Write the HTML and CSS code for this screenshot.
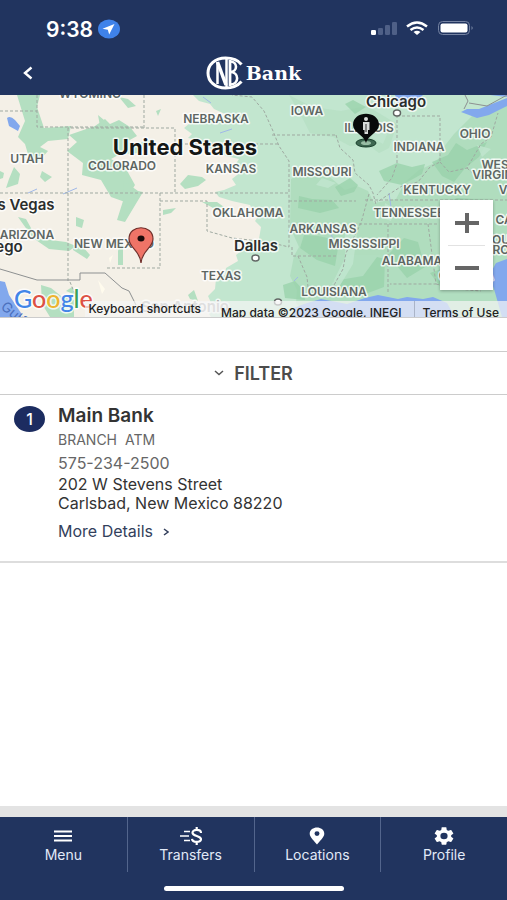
FILE: index.html
```
<!DOCTYPE html>
<html lang="en">
<head>
  <meta charset="UTF-8">
  <meta name="viewport" content="width=device-width, initial-scale=1.0">
  <title>CNB Bank Locations</title>
  <link rel="stylesheet" href="styles.css">
</head>
<body>
  <!-- Status bar -->
  <div class="status-bar">
    <div class="status-left">
      <span class="time">9:38</span>
      <svg width="22" height="20" viewBox="0 0 22 20" aria-hidden="true">
        <ellipse cx="11" cy="10" rx="11" ry="9.5" fill="#3f82ea"/>
        <path d="M16.5 5 4.5 9.7l5.3 1.1 1.4 4.7z" fill="#fff"/>
      </svg>
    </div>
    <svg width="103" height="16" viewBox="0 0 103 16" aria-hidden="true">
      <rect x="0" y="9" width="5" height="5" rx="1.3" fill="#fff"/>
      <rect x="7" y="7" width="5" height="7" rx="1.3" fill="#4f6087"/>
      <rect x="14" y="4" width="5" height="10" rx="1.3" fill="#4f6087"/>
      <rect x="21" y="1" width="5" height="13" rx="1.3" fill="#4f6087"/>
      <g fill="none" stroke="#fff" stroke-width="2.5">
        <path d="M36 5.5q10-8 20 0"/>
        <path d="M39.5 9q6.500-5 13 0"/>
      </g>
      <path d="M42.500 11q3.500-2.500 7 0L46 14z" fill="#fff"/>
      <rect x="67.500" y=".5" width="31" height="13" rx="4" fill="none" stroke="#7583a2"/>
      <rect x="69.500" y="2.500" width="27" height="9" rx="2" fill="#fff"/>
      <path d="M100.500 5q2.500 2 0 4z" fill="#7583a2"/>
    </svg>
  </div>

  <!-- Header -->
  <header class="header">
    <button class="back" aria-label="Back">
      <svg width="10" height="14" viewBox="0 0 10 14"><path d="M8.500 1.500 2 7l6.500 5.500" fill="none" stroke="#fff" stroke-width="2.400"/></svg>
    </button>
    <div class="logo">
      <svg width="38" height="34" viewBox="0 0 38 34" aria-hidden="true">
        <g fill="none" stroke="#fff">
          <path d="M35.500 8.500C32 4 26 2 19.500 2 9 2 2 8.500 2 17s7 15 17.500 15c6.500 0 12-2 16-6.500" stroke-width="3"/>
          <path d="M11.500 6v22M20.500 3v28" stroke-width="2.500"/>
          <path d="M11.500 6l8.500 23" stroke-width="3.500"/>
          <path d="M24 4v26" stroke-width="2.800"/>
          <path d="M24 5.500c8 0 8 10.500 0 10.500 9.500 0 9.500 12.500 0 12.500" stroke-width="2.600"/>
        </g>
      </svg>
      <span>Bank</span>
    </div>
  </header>

  <!-- Map -->
  <div class="map">
    <svg class="map-art" viewBox="0 0 507 222" preserveAspectRatio="xMidYMid slice" role="img" aria-label="Map of the United States">
      <rect width="507" height="222" fill="#f4f0e7"/>
      <path fill="#c2e6cf" d="M193 0l6 6 11 3 4 5 11 5-4 5-13-2-18 6-6 5 8 6-4 4 11 2 8 8 13 2 6 6 13 3-4 6 7 6-10 8 4 6-12 5-9 2 4 5 13 4 18 4 3 6 7 3-5 7 6 6-2 12-11 2-3 7-9 7 2 6-12 7-1 7-9 4-1 10-7 7 4 9-3 9 2 3H507V0z"/>
      <g fill="#acdcbb" opacity=".8">
        <path d="M289 0l23 12 29 4 26-5 30 18-8 24-10 5-12-9-17 2-17-9-23-4-9-18z" opacity=".5"/>
        <path d="M291 84l19-10 21 9 14 12 12-4 11 5 6 12 22-4 9-17 14-12 18-8 6-14 11-14 20-20 24-8h19V222H310l-14-14 1-13-7-14 4-20 5-9-9-20z"/>
      </g>
      <g fill="#b4dfc1">
        <path d="M17 0h23l-3 12 7 21 27-2-3 13-20 2-8 6 8 4-11 12-7-2-5-17-7-7 7-16z"/>
        <path d="M95 31l10-7 5 5 9-4 11 7 7 9-9 5 5 4 20-6-2 6-11 8-20 1-9 5 14 8 10 18-5 8-5 9-14-5-10-17-19-5 1-12-16-12 10-9-8-7z"/>
        <path d="M124 86l14 10 5 1-6 10-12 20-8-2 6-19zM14 72l6 7-2 10-12 4 3-9zM42 76l10 6-7 5-5-5zM18 122l8 2 5 9 4 10 31 4 10 4-7 5-20-2-16-11zM76 122l8 3-2 8-6-2zM76 144l14 16-3 4-14-9zM41 190l10 3 10 8 13 4v17H50l-8-13zM120 149h3v21h-5v-14zM66 196l6-4 4 8z"/>
        <path d="M98 20l12 10-10 1zM119 2l9 2 8 7-8 2zM156 16l5-2-3 7zM188 80l14 2 4 3-8 6-13 3-5-5zM163 115l13-2-5 5-8 2zM202 107l15 0 7 5-9 2zM188 200l6-5 4 11-8-2zM0 76l4 2-1 5-3 1z"/>
      </g>
      <g fill="#98d2aa" opacity=".75">
        <path d="M299 101l13 3 20 1 7 8-19 5-22-5zM304 140l14 1 14 3 6 9-3 18-18-6-17-12zM283 190l12-4 9 10 1 9-20-2zM335 92l15-9 8 7-4 7-13 4zM379 76l18-8 15 4 13-3-3 10-20 11-18-4zM388 160l16-17 14 4 7 25-18 11zM333 186l30-5 14-19 8 2-1 28-24 9-26-6zM432 67l16-7 8-12 11 7 20-8-8 15-13 10-12 15-12-6z"/>
        <path d="M345 9l8-4 13 7-11 7zM442 110l15-7 30 2-15 8-22 8zM430 178l17-6 9 14-14 8z"/>
      </g>
      <g fill="#c2e6cf" opacity=".8">
        <path d="M322 83l14 5-8 5-12-3zM376 32l12 5-5 12-12-7zM410 42l13 2-5 7-13-3zM385 108l10 6-4 12-8-3zM477 50l14 4-9 8zM345 135l12 4-4 30-14 23-7-3 13-26z"/>
      </g>
      <g fill="#fffbed"><path d="M98 185l7 9-3 5zM109 163l4-3-3 8z"/></g>
      <!-- Water -->
      <g fill="#82a8ed">
        <path d="M7 23q3-3 8 2l5 6-2 5-9-5zM0 186l5 1 4 13 12 18v4H0z"/>
        <path d="M395 0h28l-7 7-9 1-6 4-3-3zM461 17l6-3 12 0 28-11v8l-18 9-12 3zM490 0h17v2z"/>
        <path d="M294 213l10-4 17-5 26 5 18-6 13-3 20 4 9-2 16 2 10-2 14 6 8 14H294zM507 164l-11 4-7 13 5 13 8 28h5z"/>
      </g>
      <g fill="none" stroke="#a0b8e8" stroke-width="1">
        <path d="M63 99l14-6M28 98l9-4M220 38l12-4M203 2l8 6M389 98l2 14M294 186l4-4M333 144l-4-11"/>
      </g>
      <!-- State lines -->
      <g fill="none" stroke="#9fa9a1" stroke-width="1" stroke-dasharray="3 2">
        <path d="M0 16h37M37 0v32h107M68 33v154M144 0v33h31v65M144 33h-76M0 98h289V66l-10-15-6-15-9-20-12-14-20-2M175 49h104M160 98v75h-54M160 106h47v30l25 7 36 4 21 5V98M272 40h65M289 106h67M292 152v9h46M298 161l9 21 2 20M336 40l4 13 13 12 2 13 14 12 4 8 3 12M397 20v48l-5 15-15 17M397 21h43v46l-10 5-12 15-16 4-25 16M440 67l9 10 18-4 14-24 10-7 7-24M467 73l10 9 30-7M365 105h142M354 129h85M388 129v70M428 129l8 60h-46M436 189l20 5 25 2M467 105l-16 24 24 19 13 28M369 99l-8 29-15 30-3 16-10 18M70 187l5 12-5 8"/>
      </g>
      <g fill="none" stroke="#8d9091" stroke-width="1"><path d="M0 174l37 11h43v-7h25l17 15 7 3 7 14M464 14l4-8-3-6M469 8l18 3 20-11"/></g>
      <!-- State names -->
      <g class="state">
        <text x="90" y="3">WYOMING</text>
        <text x="216" y="28">NEBRASKA</text>
        <text x="307" y="20">IOWA</text>
        <text x="369" y="37">ILLINOIS</text>
        <text x="475" y="43">OHIO</text>
        <text x="419" y="56">INDIANA</text>
        <text x="27" y="68">UTAH</text>
        <text x="122" y="75">COLORADO</text>
        <text x="231" y="78">KANSAS</text>
        <text x="322" y="81">MISSOURI</text>
        <text x="499" y="74">WEST</text>
        <text x="499" y="84">VIRGINIA</text>
        <text x="437" y="99">KENTUCKY</text>
        <text x="503" y="99">V</text>
        <text x="248" y="122">OKLAHOMA</text>
        <text x="409" y="122">TENNESSEE</text>
        <text x="323" y="138">ARKANSAS</text>
        <text x="27" y="144">ARIZONA</text>
        <text x="114" y="153">NEW MEXICO</text>
        <text x="364" y="153">MISSISSIPPI</text>
        <text x="412" y="170">ALABAMA</text>
        <text x="508" y="129">CAR</text>
        <text x="501" y="149">OU</text>
        <text x="501" y="159">RO</text>
        <text x="466" y="185">GEORGIA</text>
        <text x="221" y="185">TEXAS</text>
        <text x="334" y="201">LOUISIANA</text>
      </g>
      <!-- Cities -->
      <g class="city">
        <text x="396" y="12">Chicago</text>
        <text x="256" y="156">Dallas</text>
        <text x="26" y="115">s Vegas</text>
        <text x="9" y="157">ego</text>
        <text x="185" y="217" class="faded">San Antonio</text>
      </g>
      <text class="country" x="185" y="60">United States</text>
      <text class="sea" x="0" y="213" transform="rotate(40 0 213)">Gulf</text>
      <g fill="#fff" stroke="#626765" stroke-width="1.500">
        <ellipse cx="397" cy="18" rx="3.500" ry="3"/><ellipse cx="255.500" cy="163" rx="3.500" ry="3"/><ellipse cx="278" cy="207" rx="3.500" ry="3"/>
      </g>
      <!-- Branch pin -->
      <path d="M141 168c-1-13-12-15-12-24 0-15 24-15 24 0 0 9-11 11-12 24z" fill="#ef7467" stroke="#702f2b" stroke-width="1.200"/>
      <ellipse cx="141" cy="143.500" rx="3.500" ry="3" fill="#1b0b0a"/>
      <!-- Current position pin -->
      <ellipse cx="366" cy="48" rx="10" ry="4" fill="#3e6751" stroke="#173d2a"/>
      <ellipse cx="366" cy="48" rx="5" ry="2" fill="#99bda5"/>
      <path d="M366 48c-2-8-13-11-13-18 0-15 26-15 26 0 0 7-11 10-13 18z" fill="#080a0a"/>
      <circle cx="366" cy="24" r="2" fill="#d8dbd9"/>
      <path d="M363 27h6.500v8H368v4h-3.500v-4H363z" fill="#d8dbd9"/><path d="M366 29v8" stroke="#333"/>
      <text class="google" x="14" y="213"><tspan fill="#4285e8">G</tspan><tspan fill="#dd5144">o</tspan><tspan fill="#edb42f">o</tspan><tspan fill="#4285e8">g</tspan><tspan fill="#38a159">l</tspan><tspan fill="#dd5144">e</tspan></text>
    </svg>
    <div class="zoom-control">
      <button aria-label="Zoom in"><svg width="24" height="20" viewBox="0 0 24 20"><path d="M0 10h24M12 0v20" stroke="#666" stroke-width="4"/></svg></button>
      <button aria-label="Zoom out"><svg width="24" height="20" viewBox="0 0 24 20"><path d="M0 10h24" stroke="#666" stroke-width="4"/></svg></button>
    </div>
    <div class="map-credits">
      <button class="shortcuts">Keyboard shortcuts</button>
      <span class="map-data">Map data ©2023 Google, INEGI</span>
      <a class="terms" href="#">Terms of Use</a>
    </div>
  </div>

  <!-- Branch list -->
  <main class="locations">
    <button class="filter">
      <svg width="10" height="6" viewBox="0 0 10 6" aria-hidden="true"><path d="M1 1l4 3.500L9 1" fill="none" stroke="#555" stroke-width="1.500"/></svg>
      FILTER
    </button>
    <article class="branch">
      <span class="number">1</span>
      <div class="details">
        <h2>Main Bank</h2>
        <p class="services"><span>BRANCH</span><span>ATM</span></p>
        <a class="phone" href="tel:5752342500">575-234-2500</a>
        <p class="address">202 W Stevens Street<br>Carlsbad, New Mexico 88220</p>
        <a class="more" href="#">More Details
          <svg width="6" height="8" viewBox="0 0 6 8" aria-hidden="true"><path d="M1 1l4 3-4 3" fill="none" stroke="#333f5c" stroke-width="1.500"/></svg>
        </a>
      </div>
    </article>
  </main>

  <!-- Bottom navigation -->
  <footer class="footer">
    <nav class="tabs">
      <a href="#">
        <svg width="20" height="18" viewBox="0 0 20 18" aria-hidden="true"><path d="M1 4.500h18M1 9h18M1 13.500h18" stroke="#fff" stroke-width="1.800"/></svg>
        Menu
      </a>
      <a href="#">
        <svg width="22" height="18" viewBox="0 0 22 18" aria-hidden="true">
          <path d="M4 4.500h6M0 9h9M4 13.500h6" stroke="#fff" stroke-width="1.700"/>
          <path d="M21 6c0-4-8.500-4-8.500-.3S21 8.500 21 12.200s-8.500 3.800-9-.4M16.700 0v3M16.700 15v3" fill="none" stroke="#fff" stroke-width="2.200"/>
        </svg>
        Transfers
      </a>
      <a href="#">
        <svg width="16" height="18" viewBox="0 0 16 18" aria-hidden="true"><path fill="#fff" fill-rule="evenodd" d="M8 17.500C6 14.500.7 10.500.7 6.700c0-8.300 14.600-8.300 14.600 0C15.300 10.500 10 14.500 8 17.500zM8 4.300a2.500 2.300 0 1 0 0 4.600 2.500 2.300 0 0 0 0-4.600z"/></svg>
        Locations
      </a>
      <a href="#">
        <svg width="20" height="18" viewBox="2 2 20 20" preserveAspectRatio="none" aria-hidden="true"><path fill="#fff" d="M19.140 12.940c.04-.3.060-.61.060-.94s-.02-.64-.07-.94l2.030-1.580c.18-.14.230-.41.120-.61l-1.920-3.320c-.12-.22-.37-.29-.59-.22l-2.390.96c-.5-.38-1.030-.7-1.620-.94l-.36-2.540c-.04-.24-.24-.41-.48-.41h-3.840c-.24 0-.43.170-.47.410l-.36 2.540c-.59.240-1.130.570-1.620.94l-2.390-.96c-.22-.08-.47 0-.59.220L2.740 8.870c-.12.210-.08.470.120.610l2.030 1.580c-.05.300-.09.630-.09.940s.02.640.070.940l-2.030 1.580c-.18.140-.23.410-.12.610l1.920 3.320c.12.220.370.290.590.220l2.390-.96c.5.380 1.030.7 1.620.94l.36 2.540c.05.240.240.410.480.410h3.840c.24 0 .44-.17.470-.41l.36-2.540c.59-.24 1.130-.56 1.620-.94l2.390.96c.22.080.47 0 .59-.22l1.920-3.320c.12-.22.070-.47-.12-.61zM12 15.600a3.600 3.600 0 1 1 0-7.200 3.600 3.600 0 0 1 0 7.200z"/></svg>
        Profile
      </a>
    </nav>
    <div class="home-bar"></div>
  </footer>
</body>
</html>
```

FILE: styles.css
```
* {
  box-sizing: border-box;
}

body {
  margin: 0;
  min-height: 100vh;
  display: flex;
  flex-direction: column;
  font-family: Inter, Roboto, sans-serif;
  font-size: 16px;
  color: #333;
  background-color: #fff;
}

h2,
p {
  margin: 0;
}

button {
  font: inherit;
  color: inherit;
  background: none;
  border: none;
  padding: 0;
  cursor: pointer;
}

a {
  color: inherit;
  text-decoration: none;
}

.status-bar {
  display: flex;
  justify-content: space-between;
  align-items: center;
  height: 50px;
  padding: 8px 33px 0 46px;
  background-color: #21345f;
}

.status-left {
  display: flex;
  align-items: center;
  gap: 5px;
}

.time {
  color: #fff;
  font-size: 21px;
  font-weight: 600;
}

.header {
  display: grid;
  grid-template-columns: 56px 1fr 56px;
  align-items: center;
  height: 45px;
  background-color: #21345f;
}

.back {
  height: 44px;
}

.back svg {
  display: block;
  margin: 0 auto;
}

.logo {
  display: flex;
  justify-content: center;
  align-items: center;
  gap: 2px;
  color: #fff;
  font-family: "DejaVu Serif", serif;
  font-size: 19px;
  font-weight: bold;
}

/* Map */
.map {
  position: relative;
  height: 223px;
  overflow: hidden;
  border-bottom: 1px solid #ccc;
}

.map-art {
  display: block;
  width: 100%;
  height: 222px;
}

.map text {
  font-family: Inter, sans-serif;
  text-anchor: middle;
  paint-order: stroke;
  stroke: rgba(255, 255, 255, 0.8);
  stroke-width: 3px;
  stroke-linejoin: round;
}

.state text {
  font-size: 12px;
  font-weight: 600;
  fill: #5e6663;
}

.city text {
  font-size: 15px;
  font-weight: 600;
  fill: #2b2e2d;
}

.city .faded {
  fill: #aaa;
}

.map .country {
  font-size: 22px;
  font-weight: 700;
  fill: #151716;
}

.map .sea {
  font-size: 14px;
  fill: #4b70bd;
  stroke: none;
  text-anchor: start;
}

.map .google {
  font-family: Lato, sans-serif;
  font-size: 25px;
  font-weight: 500;
  text-anchor: start;
}

.zoom-control {
  position: absolute;
  right: 14px;
  bottom: 27px;
  width: 53px;
  padding: 0 8px;
  background-color: #fff;
  box-shadow: 0 1px 3px rgba(0, 0, 0, 0.3);
}

.zoom-control button {
  display: flex;
  justify-content: center;
  align-items: center;
  width: 100%;
  height: 45px;
}

.zoom-control button + button {
  border-top: 1px solid #e2e2e2;
}

.map-credits {
  position: absolute;
  right: 0;
  bottom: 0;
  display: flex;
  height: 16px;
  font-size: 12px;
  line-height: 16px;
  font-weight: 500;
  color: #222;
  white-space: nowrap;
}

.map-credits > * {
  background-color: rgba(245, 245, 245, 0.7);
}

.shortcuts {
  padding: 0 12px 0 4px;
}

.map-data {
  padding: 4px 12px 0 8px;
}

.terms {
  padding: 4px 8px 0;
  border-left: 1px solid #aab4c8;
}

/* Branch list */
.locations {
  flex: 1;
  padding-top: 33px;
}

.filter {
  display: flex;
  justify-content: center;
  align-items: center;
  gap: 10px;
  width: 100%;
  height: 44px;
  border-top: 1px solid #ccc;
  border-bottom: 1px solid #ccc;
  color: #4c4c4c;
  font-size: 18px;
  font-weight: 600;
}

.branch {
  display: flex;
  gap: 13px;
  padding: 11px 14px 20px;
  border-bottom: 2px solid #ddd;
}

.number {
  display: flex;
  justify-content: center;
  align-items: center;
  width: 31px;
  height: 26px;
  border-radius: 50%;
  background-color: #1c2c60;
  color: #fff;
  font-weight: 500;
}

.details {
  line-height: 19px;
}

.details h2 {
  font-size: 19px;
  font-weight: 600;
}

.services {
  display: flex;
  gap: 8px;
  margin-top: 5px;
  font-size: 14px;
  color: #666;
}

.phone {
  display: block;
  margin-top: 5px;
  color: #666;
}

.address {
  margin-top: 2px;
}

.more {
  display: flex;
  align-items: center;
  gap: 10px;
  margin-top: 9px;
  color: #333f5c;
}

/* Bottom navigation */
.footer {
  border-top: 11px solid #e3e3e3;
  background-color: #21345f;
}

.tabs {
  display: grid;
  grid-template-columns: repeat(4, 1fr);
}

.tabs a {
  display: flex;
  flex-direction: column;
  align-items: center;
  gap: 2px;
  height: 55px;
  padding-top: 10px;
  color: #e2eaf8;
  font-size: 14px;
  line-height: 16px;
}

.tabs a + a {
  border-left: 1px solid #53658c;
}

.home-bar {
  width: 180px;
  height: 5px;
  margin: 14px auto 9px;
  border-radius: 3px;
  background-color: #fff;
}
```
